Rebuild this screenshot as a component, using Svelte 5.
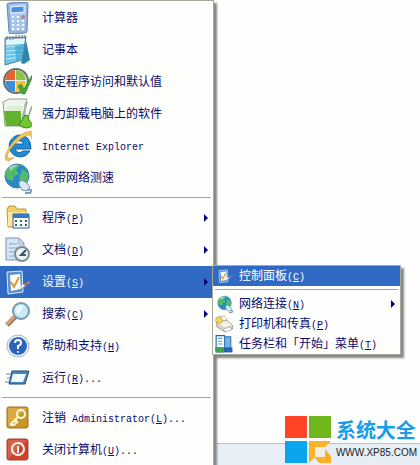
<script lang="ts">
	interface MenuItem {
		icon: string;
		label: string;
		latin?: string;
		key?: string;
		tail?: string;
		arrow?: boolean;
		open?: boolean;
	}

	const groups: MenuItem[][] = [
		[
			{ icon: 'calculator', label: '计算器' },
			{ icon: 'notepad', label: '记事本' },
			{ icon: 'defaults', label: '设定程序访问和默认值' },
			{ icon: 'uninstall', label: '强力卸载电脑上的软件' },
			{ icon: 'ie', label: '', latin: 'Internet Explorer' },
			{ icon: 'speed', label: '宽带网络测速' }
		],
		[
			{ icon: 'programs', label: '程序', key: 'P', arrow: true },
			{ icon: 'documents', label: '文档', key: 'D', arrow: true },
			{ icon: 'settings', label: '设置', key: 'S', arrow: true, open: true },
			{ icon: 'search', label: '搜索', key: 'C', arrow: true },
			{ icon: 'help', label: '帮助和支持', key: 'H' },
			{ icon: 'run', label: '运行', key: 'R', tail: '...' }
		],
		[
			{ icon: 'logoff', label: '注销', latin: ' Administrator', key: 'L', tail: '...' },
			{ icon: 'shutdown', label: '关闭计算机', key: 'U', tail: '...' }
		]
	];

	const submenu: MenuItem[][] = [
		[{ icon: 'settings', label: '控制面板', key: 'C', open: true }],
		[
			{ icon: 'network', label: '网络连接', key: 'N', arrow: true },
			{ icon: 'printer', label: '打印机和传真', key: 'P' },
			{ icon: 'taskbar', label: '任务栏和「开始」菜单', key: 'T' }
		]
	];
</script>

{#snippet icon(name: string)}
	<svg class="icon" viewBox="0 0 32 32" aria-hidden="true">
		{#if name === 'calculator'}
			<path d="M9 1l17-1q2 0 2 2l-1 27q0 2-2 2l-14 1q-2 0-2-2L7 3q0-2 2-2z" fill="#8fb4e4" stroke="#6684b4" />
			<path d="M10 3l16-1-1 26-14 1z" fill="#b9d4f4" />
			<path d="M11 5l13-1v6l-13 1z" fill="#4b8de0" stroke="#e8f4ff" />
			{#each [15, 19, 23, 27] as y}
				{#each [13, 18, 23] as x}
					<circle cx={x} cy={y} r="2" fill={x === 23 && y === 15 ? '#e27862' : '#f4faff'} stroke="#7b9fd2" stroke-width=".7" />
				{/each}
			{/each}
		{:else if name === 'notepad'}
			<path d="M26 6l4 20-6 4-3-1z" fill="#2a86ae" />
			<path d="M5 4l21-1-4 23-17 5z" fill="#6cc6ea" stroke="#587e91" />
			<path d="M6 5l19-1-1 6-18 1z" fill="#dff6fb" />
			<path d="M6 13l17-1M6 17l17-1M6 21l16-1M6 25l15-2" stroke="#b8edfa" />
			<path d="M15 12l9-2-3 15-5 2z" fill="#2fa0d2" opacity=".6" />
			<path d="M7 2v4M10 2v4M13 2v4M16 1v4M19 1v4M22 1v4M25 1v4" stroke="#666e70" />
		{:else if name === 'defaults'}
			<circle cx="16" cy="15" r="12" fill="#e8eee9" stroke="#68706c" stroke-width="2" />
			<path d="M15 4v10H5Q6 5 15 4z" fill="#e96331" />
			<path d="M16 4q9 1 10 10H16z" fill="#8cc64b" />
			<path d="M5 15h10v11Q6 25 5 15z" fill="#3c8ddb" />
			<path d="M16 15h10q-1 10-10 11z" fill="#f1c638" />
			<path d="M18 20l3-2 3 5 8-14 1 1-8 18h-3z" fill="#45a839" stroke="#268625" stroke-width=".6" />
		{:else if name === 'uninstall'}
			<path d="M3 4l6-3h18l-2 6v21H5z" fill="#eff6e9" stroke="#8fa184" />
			<path d="M4 13h17v15H6z" fill="#61b32b" />
			<path d="M4 12l5-4h15l-3 5z" fill="#dfecd5" />
			<path d="M22 21l5-17M27 22l5-14" stroke="#a5b0ab" stroke-width="2" />
			<path d="M25 17l3 1 1 4 4 5q-6 6-14 0z" fill="#73c832" stroke="#328918" />
		{:else if name === 'ie'}
			<path d="M19 5A11 11 0 1 0 30 21h-7q-5 4-8-2h16Q31 5 19 5zm-4 9q3-7 9 0z" fill="#238ad0" stroke="#1767a9" />
			<path d="M6 30C1 25 20-2 32 2c3 2 1 6 0 8 0-9-8-4-15 2S6 25 8 28q3 1 6-1-4 5-8 3z" fill="#f4c756" stroke="#bf862d" stroke-width=".5" />
		{:else if name === 'speed' || name === 'network'}
			<circle cx="17" cy="14" r="12" fill="#268bc7" stroke="#4483a5" />
			<path d="M7 7q6-5 13-4l-4 5 3 4-5 2-1 5-6-2-2-5zm15 0l6 4v8l-5 4-4-6z" fill="#54b968" />
			<path d="M9 5q5-3 9-2l-8 6z" fill="#b9f2ef" opacity=".6" />
			<path d="M19 20l3-2 5 3 3 4-3 4-5-1-3-5z" fill="#d9e8f8" stroke="#718fad" />
			<path d="M27 28q7-1 3 3h-5" fill="none" stroke="#789dbf" stroke-width="2" />
		{:else if name === 'programs'}
			<path d="M7 7l2-3h6l2 3h9v18H8z" fill="#f0ce65" stroke="#b99a42" />
			<path d="M8 10h18v14H8z" fill="#ffe79b" />
			<path d="M13 12h16v14H13z" fill="#f5faff" stroke="#305d8b" />
			<path d="M13 12h16v4H13z" fill="#397abe" />
			<path d="M15 18h2v2h-2zm5 0h2v2h-2zm5 0h2v2h-2zm-10 4h2v2h-2zm5 0h2v2h-2zm5 0h2v2h-2z" fill="#346b55" />
		{:else if name === 'documents'}
			<path d="M6 4h13l5 5v17H6z" fill="#d3e4f6" stroke="#7892b0" />
			<path d="M19 4v6h5M9 10h8M9 14h11M9 18h8M9 22h8" fill="none" stroke="#8aa8c5" />
			<circle cx="22" cy="20" r="7" fill="#edf4f5" stroke="#818d94" stroke-width="2" />
			<path d="M26 16l-5 5h5" fill="none" stroke="#395c6c" stroke-width="2" />
		{:else if name === 'settings'}
			<path d="M7 6l15-1 1 21-15 2z" fill="#568fc4" stroke="#dceeff" />
			<path d="M10 9l10-1 1 15-10 2z" fill="#fffdf5" />
			<path d="M11 16l3 5 5-10" fill="none" stroke="#d69b3a" stroke-width="2" />
			<path d="M16 23l8-5 2 2-7 3z" fill="#e3ebf2" />
			<path d="M24 19l6-3" stroke="#b5785f" stroke-width="2" />
		{:else if name === 'search'}
			<path d="M7 27l9-9" stroke="#9d7557" stroke-width="5" />
			<path d="M7 26l9-9" stroke="#d2a678" stroke-width="3" />
			<circle cx="21" cy="13" r="8" fill="#c5e9f8" stroke="#779bad" stroke-width="2" />
			<path d="M15 12q4-7 9-4l-6 9z" fill="#f5fdff" opacity=".8" />
		{:else if name === 'help'}
			<circle cx="18" cy="16" r="11" fill="#edf2f8" stroke="#a8b3c2" />
			<circle cx="18" cy="16" r="9" fill="#2b64be" />
			<path d="M15 13q0-3 3-3t3 3q0 2-3 3v3" fill="none" stroke="white" stroke-width="2" />
			<circle cx="18" cy="22" r="1" fill="white" />
		{:else if name === 'run'}
			<path d="M12 9h17l-4 13H9z" fill="#4c86b8" stroke="#254d76" />
			<path d="M13 12h13l-3 8H11z" fill="#eefaff" />
			<path d="M6 12h5M7 16h3M5 20h4" stroke="#6d8797" />
		{:else if name === 'logoff'}
			<rect x="7" y="5" width="21" height="21" rx="2" fill="#c99526" stroke="#a1712c" />
			<path d="M8 6h19L8 25z" fill="#edbd59" opacity=".5" />
			<circle cx="21" cy="12" r="4" fill="none" stroke="#fffbe5" stroke-width="2" />
			<path d="M18 15l-7 7v1h3l2-2m-1-3l3 3" fill="none" stroke="#fffbe5" stroke-width="2" />
		{:else if name === 'shutdown'}
			<rect x="7" y="5" width="21" height="21" rx="2" fill="#c9432d" stroke="#9e493c" />
			<path d="M8 6h19L8 25z" fill="#e98068" opacity=".5" />
			<circle cx="18" cy="15" r="6" fill="none" stroke="#fff5ed" stroke-width="2" />
			<path d="M18 12v7" stroke="#fff5ed" stroke-width="2" />
		{:else if name === 'printer'}
			<path d="M6 4l11-3 5 11-13 4z" fill="#fffdf1" stroke="#a09d90" />
			<path d="M3 13l18-4 10 9v7l-14 5L3 21z" fill="#d8d4c7" stroke="#77736e" />
			<path d="M4 14l17-4 9 8-13 4z" fill="#f6f2e5" />
			<circle cx="7" cy="9" r="6" fill="#f4d35e" stroke="#a98b42" />
			<path d="M15 25l12-4 3 5-12 4z" fill="#fff" stroke="#888" />
		{:else if name === 'taskbar'}
			<path d="M2 1h15v26H2z" fill="#f9fcfd" stroke="#2868a2" stroke-width="2" />
			<path d="M17 3h11v23H17z" fill="#74b4e5" stroke="#3975ae" stroke-width="2" />
			<path d="M5 6h8M5 11h8M5 16h8" stroke="#65a8b1" stroke-width="2" />
			<path d="M1 22h30v9H1z" fill="#2860b5" />
			<path d="M1 22h15v9H1z" fill="#3ca449" />
		{/if}
	</svg>
{/snippet}

{#snippet entry(item: MenuItem)}
	<button class="item" class:active={item.open} type="button" role="menuitem">
		{@render icon(item.icon)}
		<span class="label">{item.label}<span class="latin">{item.latin ?? ''}{#if item.key}(<u>{item.key}</u>){/if}{item.tail ?? ''}</span></span>
		{#if item.arrow}
			<svg class="arrow" viewBox="0 0 4 8" aria-hidden="true"><path d="M0 0l4 4-4 4z" /></svg>
		{/if}
	</button>
{/snippet}

<main class="desktop">
	<nav class="menu start" aria-label="开始">
		{#each groups as group}
			<ul role="menu">
				{#each group as item}
					<li>
						{@render entry(item)}
						{#if item.open}
							<div class="menu sub">
								{#each submenu as part}
									<ul role="menu">
										{#each part as child}
											<li>{@render entry(child)}</li>
										{/each}
									</ul>
								{/each}
							</div>
						{/if}
					</li>
				{/each}
			</ul>
		{/each}
	</nav>

	<div class="brand">
		<svg class="mark" viewBox="0 0 46 47" aria-hidden="true">
			<path d="M0 0h22v22H0z" fill="#ff4526" />
			<path d="M24 0h22v22H24z" fill="#70b71c" />
			<path d="M0 25h22v22H0z" fill="#0ba5ee" />
			<path d="M24 25h22l-6 6H30v10l-6 6z" fill="#fdb12b" />
			<path d="M40 33l6 7v7H34l-5-6h11z" fill="#fdb12b" />
			<path d="M30 31h10v10H30z" fill="#f4efe4" />
		</svg>
		<div class="words">
			<strong>系统大全</strong>
			<span>WWW.XP85.COM</span>
		</div>
	</div>
</main>

<style>
	:global(body) {
		margin: 0;
		overflow: hidden;
		background: #fefefe;
	}

	.desktop {
		position: relative;
		display: flex;
		align-items: flex-start;
		height: 100vh;
		overflow: hidden;
		background: linear-gradient(to top, #e8eef5 21px, #b9c1c9 21px, #b9c1c9 22px, #fefefe 22px);
	}

	.menu {
		box-sizing: border-box;
		background: #fefefc;
		border: 1px solid #aca899;
		box-shadow: 3px 3px 2px #858585;
		font: 12px/16px 'Noto Sans CJK SC', sans-serif;
	}

	.start {
		width: 214px;
		flex-shrink: 0;
		padding-top: 1px;
		border-left: 0;
	}

	ul {
		margin: 0;
		padding: 0;
		list-style: none;
	}

	ul + ul::before {
		content: '';
		display: block;
		height: 1px;
		margin: 3px 2px 4px;
		background: #aca899;
	}

	li {
		position: relative;
	}

	.item {
		display: flex;
		align-items: center;
		gap: 10px;
		width: 100%;
		height: 32px;
		padding: 0 5px 0 0;
		border: 0;
		background: none;
		color: #0a0a6c;
		font: inherit;
		text-align: left;
	}

	.item.active {
		background: #316ac5;
		color: #fff;
	}

	.icon {
		width: 32px;
		height: 32px;
		flex-shrink: 0;
	}

	.label {
		flex: 1;
		white-space: pre;
	}

	.latin {
		font: 10px/16px 'Liberation Mono', monospace;
	}

	.arrow {
		width: 4px;
		height: 8px;
		fill: #000080;
	}

	.sub {
		position: absolute;
		top: -1px;
		left: calc(100% - 1px);
		z-index: 1;
		width: 189px;
	}

	.sub .item {
		gap: 6px;
		height: 20px;
		padding: 0 5px 0 2px;
	}

	.sub .icon {
		width: 18px;
		height: 18px;
	}

	.brand {
		position: absolute;
		right: 3px;
		bottom: 2px;
		display: flex;
		gap: 5px;
	}

	.mark {
		width: 46px;
		height: 47px;
	}

	.words {
		display: flex;
		flex-direction: column;
		gap: 2px;
	}

	.words strong {
		color: #189de8;
		font: bold 20px/28px 'Noto Sans CJK SC', sans-serif;
	}

	.words span {
		color: #222;
		font: 10px/14px 'Liberation Sans', sans-serif;
	}
</style>
